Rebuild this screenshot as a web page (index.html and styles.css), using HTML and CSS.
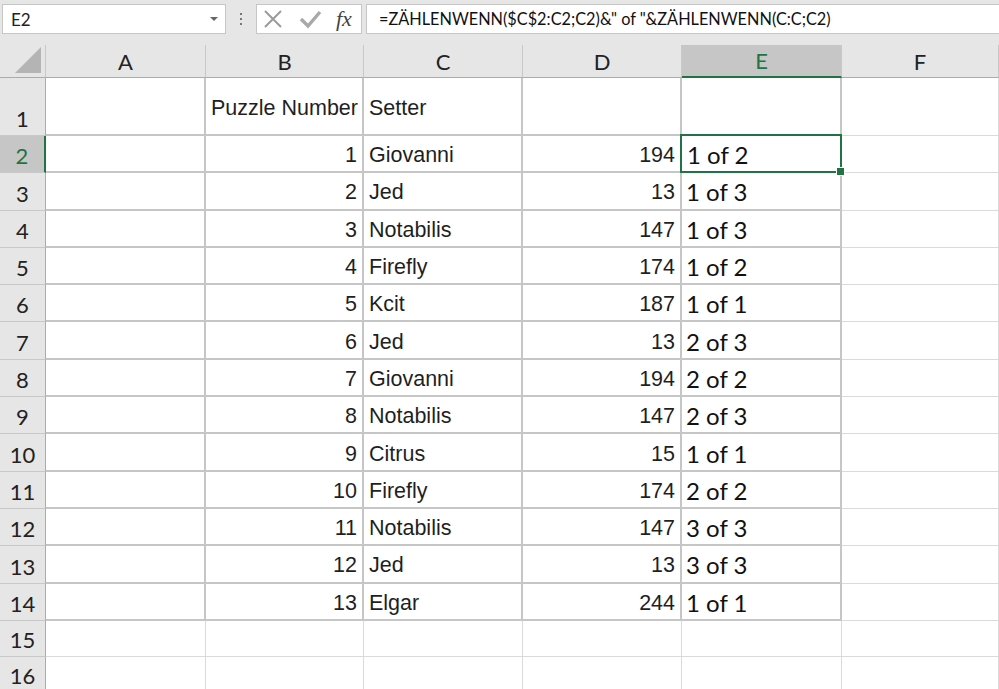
FILE: index.html
```html
<!DOCTYPE html>
<html lang="de">
<head>
    <meta charset="UTF-8">
    <title>Puzzle Setter - Excel</title>
    <link rel="stylesheet" href="styles.css">
</head>
<body>

    <!-- Bearbeitungsleiste -->
    <div class="formula-bar">
        <div class="name-box">
            <span>E2</span>
            <span class="drop-arrow"></span>
        </div>
        <div class="grip"><i></i><i></i><i></i></div>
        <div class="fx-box">
            <svg class="icon" width="24" height="20" viewBox="0 0 24 20">
                <path d="M3 2 L19 18 M19 2 L3 18" stroke="#9b9b9b" stroke-width="2" fill="none"/>
            </svg>
            <svg class="icon" width="24" height="20" viewBox="0 0 24 20">
                <path d="M2 10 L9 17 L21 3" stroke="#a9a9a9" stroke-width="3.4" fill="none"/>
            </svg>
            <span class="fx">fx</span>
        </div>
        <div class="formula">=ZÄHLENWENN($C$2:C2;C2)&amp;" of "&amp;ZÄHLENWENN(C:C;C2)</div>
    </div>

    <!-- Tabelle -->
    <div class="sheet">
        <div class="corner">
            <svg width="28" height="28" viewBox="0 0 28 28"><polygon points="27,1 27,27 1,27" fill="#b4b4b4"/></svg>
        </div>
        <div class="col-head">A</div>
        <div class="col-head">B</div>
        <div class="col-head">C</div>
        <div class="col-head">D</div>
        <div class="col-head sel">E</div>
        <div class="col-head">F</div>

        <div class="row-head">1</div>
        <div class="cell"></div>
        <div class="cell">Puzzle Number</div>
        <div class="cell">Setter</div>
        <div class="cell"></div>
        <div class="cell"></div>
        <div class="cell plain"></div>

        <div class="row-head sel">2</div>
        <div class="cell"></div>
        <div class="cell num">1</div>
        <div class="cell">Giovanni</div>
        <div class="cell num">194</div>
        <div class="cell calc active">1 of 2</div>
        <div class="cell plain"></div>

        <div class="row-head">3</div>
        <div class="cell"></div>
        <div class="cell num">2</div>
        <div class="cell">Jed</div>
        <div class="cell num">13</div>
        <div class="cell calc">1 of 3</div>
        <div class="cell plain"></div>

        <div class="row-head">4</div>
        <div class="cell"></div>
        <div class="cell num">3</div>
        <div class="cell">Notabilis</div>
        <div class="cell num">147</div>
        <div class="cell calc">1 of 3</div>
        <div class="cell plain"></div>

        <div class="row-head">5</div>
        <div class="cell"></div>
        <div class="cell num">4</div>
        <div class="cell">Firefly</div>
        <div class="cell num">174</div>
        <div class="cell calc">1 of 2</div>
        <div class="cell plain"></div>

        <div class="row-head">6</div>
        <div class="cell"></div>
        <div class="cell num">5</div>
        <div class="cell">Kcit</div>
        <div class="cell num">187</div>
        <div class="cell calc">1 of 1</div>
        <div class="cell plain"></div>

        <div class="row-head">7</div>
        <div class="cell"></div>
        <div class="cell num">6</div>
        <div class="cell">Jed</div>
        <div class="cell num">13</div>
        <div class="cell calc">2 of 3</div>
        <div class="cell plain"></div>

        <div class="row-head">8</div>
        <div class="cell"></div>
        <div class="cell num">7</div>
        <div class="cell">Giovanni</div>
        <div class="cell num">194</div>
        <div class="cell calc">2 of 2</div>
        <div class="cell plain"></div>

        <div class="row-head">9</div>
        <div class="cell"></div>
        <div class="cell num">8</div>
        <div class="cell">Notabilis</div>
        <div class="cell num">147</div>
        <div class="cell calc">2 of 3</div>
        <div class="cell plain"></div>

        <div class="row-head">10</div>
        <div class="cell"></div>
        <div class="cell num">9</div>
        <div class="cell">Citrus</div>
        <div class="cell num">15</div>
        <div class="cell calc">1 of 1</div>
        <div class="cell plain"></div>

        <div class="row-head">11</div>
        <div class="cell"></div>
        <div class="cell num">10</div>
        <div class="cell">Firefly</div>
        <div class="cell num">174</div>
        <div class="cell calc">2 of 2</div>
        <div class="cell plain"></div>

        <div class="row-head">12</div>
        <div class="cell"></div>
        <div class="cell num">11</div>
        <div class="cell">Notabilis</div>
        <div class="cell num">147</div>
        <div class="cell calc">3 of 3</div>
        <div class="cell plain"></div>

        <div class="row-head">13</div>
        <div class="cell"></div>
        <div class="cell num">12</div>
        <div class="cell">Jed</div>
        <div class="cell num">13</div>
        <div class="cell calc">3 of 3</div>
        <div class="cell plain"></div>

        <div class="row-head">14</div>
        <div class="cell"></div>
        <div class="cell num">13</div>
        <div class="cell">Elgar</div>
        <div class="cell num">244</div>
        <div class="cell calc">1 of 1</div>
        <div class="cell plain"></div>

        <div class="row-head">15</div>
        <div class="cell plain"></div>
        <div class="cell plain"></div>
        <div class="cell plain"></div>
        <div class="cell plain"></div>
        <div class="cell plain"></div>
        <div class="cell plain"></div>

        <div class="row-head">16</div>
        <div class="cell plain"></div>
        <div class="cell plain"></div>
        <div class="cell plain"></div>
        <div class="cell plain"></div>
        <div class="cell plain"></div>
        <div class="cell plain"></div>
    </div>

</body>
</html>
```

FILE: styles.css
```css
/* Reset e base */
* {
    margin: 0;
    padding: 0;
    box-sizing: border-box;
}

body {
    width: 999px;
    height: 689px;
    overflow: hidden;
    background-color: #e6e6e6;
    font-family: "Liberation Sans", Arial, sans-serif;
    color: #1f1f1f;
}

/* Bearbeitungsleiste */
.formula-bar {
    display: flex;
    align-items: center;
    height: 45px;
    padding: 4px 0 11px 2px;
}

.name-box {
    display: flex;
    align-items: center;
    justify-content: space-between;
    width: 224px;
    height: 30px;
    padding: 0 7px 0 8px;
    background-color: #fff;
    border: 1px solid #c6c6c6;
    font-family: Lato, sans-serif;
    font-size: 17px;
    color: #222;
}

.drop-arrow {
    width: 0;
    height: 0;
    border-left: 4px solid transparent;
    border-right: 4px solid transparent;
    border-top: 4px solid #666;
}

.grip {
    display: flex;
    flex-direction: column;
    gap: 3px;
    width: 30px;
    align-items: center;
}

.grip i {
    display: block;
    width: 2px;
    height: 2px;
    background-color: #777;
}

.fx-box {
    display: flex;
    align-items: center;
    width: 106px;
    height: 30px;
    padding: 0 0 0 5px;
    gap: 13px;
    background-color: #fff;
    border: 1px solid #c6c6c6;
}

.icon {
    display: block;
}

.fx {
    font-family: "Liberation Serif", serif;
    font-style: italic;
    font-size: 22px;
    color: #444;
}

.formula {
    flex: 1;
    height: 30px;
    margin-left: 4px;
    padding: 4px 0 0 12px;
    background-color: #fff;
    border: 1px solid #c6c6c6;
    border-right: none;
    font-family: Lato, sans-serif;
    font-size: 16.3px;
    color: #111;
    white-space: nowrap;
}

/* Grelha da folha */
.sheet {
    display: grid;
    grid-template-columns: 46px 160px 158px 159px 159px 160px 157px;
    grid-template-rows: 33px 58px repeat(13, 37.3px) 36px 36px;
    background-color: #fff;
}

.corner {
    display: flex;
    align-items: flex-end;
    justify-content: flex-end;
    padding: 0 3px 3px 0;
    background-color: #e6e6e6;
    border-right: 1px solid #c8c8c8;
    border-bottom: 1px solid #ababab;
}

.col-head {
    display: flex;
    align-items: center;
    justify-content: center;
    background-color: #e6e6e6;
    border-right: 1px solid #c8c8c8;
    border-bottom: 1px solid #ababab;
    font-family: Lato, sans-serif;
    font-size: 22px;
    color: #222;
}

.col-head.sel {
    background-color: #c6c6c6;
    color: #217346;
    border-bottom: 2px solid #217346;
}

.row-head {
    display: flex;
    align-items: flex-end;
    justify-content: center;
    padding-bottom: 3px;
    background-color: #e6e6e6;
    border-right: 1px solid #ababab;
    border-bottom: 1px solid #c8c8c8;
    font-family: Lato, sans-serif;
    font-size: 22px;
    color: #222;
}

.row-head.sel {
    background-color: #c6c6c6;
    color: #217346;
    border-right: 2px solid #217346;
}

.cell {
    display: flex;
    align-items: center;
    padding: 4px 5px 0;
    border-right: 2px solid #c6c6c6;
    border-bottom: 2px solid #c6c6c6;
    font-size: 21.5px;
    white-space: nowrap;
}

.cell.num {
    justify-content: flex-end;
}

.cell.calc {
    padding-top: 2px;
    padding-left: 4px;
    font-family: Lato, sans-serif;
    font-size: 24px;
    color: #111;
}

.cell.plain {
    border-right: 1px solid #dadada;
    border-bottom: 1px solid #dadada;
}

/* Célula activa */
.cell.active {
    position: relative;
    border: 2px solid #217346;
    margin: -2px 0 0 -2px;
    padding-left: 5px;
}

.cell.active::after {
    content: "";
    position: absolute;
    right: -5px;
    bottom: -5px;
    width: 7px;
    height: 7px;
    background-color: #217346;
    border: 1px solid #fff;
}
```
